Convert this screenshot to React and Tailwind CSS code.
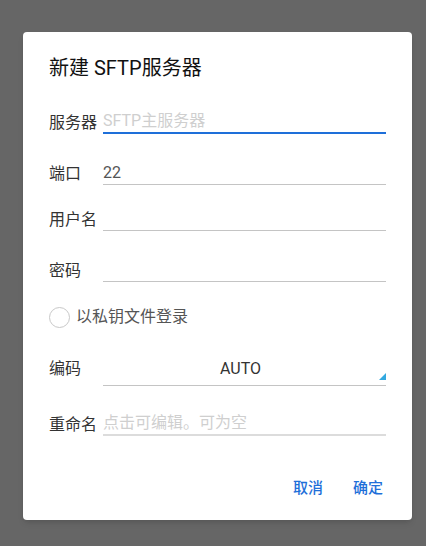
import React from "react";

const font = { fontFamily: '"Roboto", "Noto Sans CJK SC", sans-serif' };

const Field = ({ label, value, placeholder, active, thick, className = "" }) => (
  <div className={`flex items-end ${className}`}>
    <div className="w-[54px] shrink-0 text-[16px] leading-[22px] text-[#333]">{label}</div>
    <div
      className={`flex-1 text-[16px] leading-[22px] ${
        active ? "border-b-2 border-[#1e6fd9]" : thick ? "border-b-2 border-[#dcdcdc]" : "border-b border-[#c4c4c4]"
      }`}
    >
      {value ? (
        <span className="text-[#555]">{value}</span>
      ) : (
        <span className="text-[#cfcfcf]">{placeholder}</span>
      )}
    </div>
  </div>
);

export default function App() {
  return (
    <div className="h-[546px] w-full bg-[#666666] pt-[32px] pl-[23px]" style={font}>
      <div className="w-[389px] h-[488px] rounded-[4px] bg-white pt-[22px] pl-[26px] pr-[26px] shadow-md">
        <h2 className="text-[20px] leading-[28px] text-[#111]">新建 SFTP服务器</h2>

        <Field className="mt-[28px]" label="服务器" placeholder="SFTP主服务器" active />
        <Field className="mt-[28px]" label="端口" value="22" />
        <Field className="mt-[24px]" label="用户名" />
        <Field className="mt-[29px]" label="密码" />

        {/* 私钥登录 */}
        <div className="mt-[24px] flex items-center h-[22px]">
          <div className="w-[21px] h-[21px] rounded-full border-[1.5px] border-[#c8c8c8]" />
          <span className="ml-[6px] text-[16px] leading-[22px] text-[#555]">以私钥文件登录</span>
        </div>

        {/* 编码 */}
        <div className="mt-[30px] flex items-end">
          <div className="w-[54px] shrink-0 pb-[6px] text-[16px] leading-[22px] text-[#333]">编码</div>
          <div className="relative flex-1 border-b border-[#c4c4c4] pb-[5px] pr-[8px] text-center text-[16px] leading-[22px] text-[#333]">
            AUTO
            <svg className="absolute right-0 bottom-[5px]" width="7" height="7" viewBox="0 0 7 7">
              <polygon points="7,0 7,7 0,7" fill="#33a9e0" />
            </svg>
          </div>
        </div>

        <Field className="mt-[26px]" label="重命名" placeholder="点击可编辑。可为空" thick />

        <div className="mt-[41px] flex justify-end pr-[3px] gap-[30px] text-[15px] leading-[22px] font-medium text-[#1e6fd9]">
          <button>取消</button>
          <button>确定</button>
        </div>
      </div>
    </div>
  );
}
